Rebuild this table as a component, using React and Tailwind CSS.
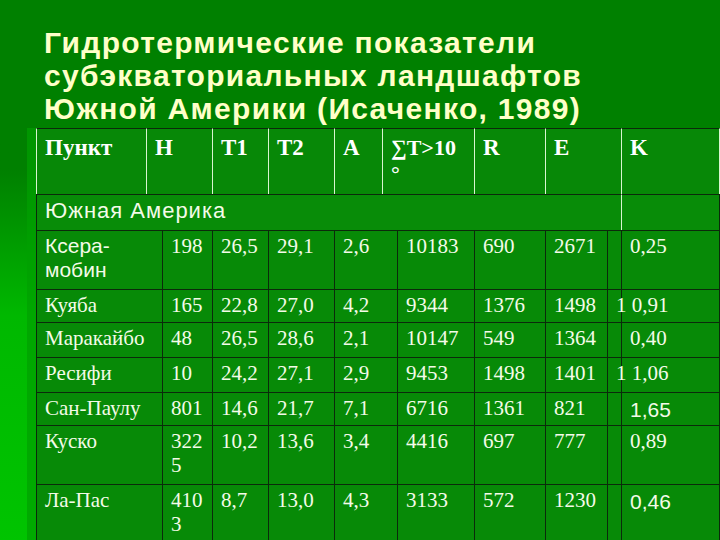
import React from 'react';

const serif = "font-['Liberation_Serif','Times_New_Roman',serif]";
const sans = "font-['Liberation_Sans',Arial,sans-serif]";

// data rows of the table
const rows = [
  { name: ['Ксера-', 'мобин'], nameSans: true, h: ['198'], t1: '26,5', t2: '29,1', a: '2,6', s: '10183', r: '690', e: '2671', k: '0,25', height: 'h-[59px]' },
  { name: ['Куяба'], h: ['165'], t1: '22,8', t2: '27,0', a: '4,2', s: '9344', r: '1376', e: '1498', k: '1 0,91', kShift: true, height: 'h-[33px]' },
  { name: ['Маракайбо'], h: ['48'], t1: '26,5', t2: '28,6', a: '2,1', s: '10147', r: '549', e: '1364', k: '0,40', height: 'h-[35px]' },
  { name: ['Ресифи'], h: ['10'], t1: '24,2', t2: '27,1', a: '2,9', s: '9453', r: '1498', e: '1401', k: '1 1,06', kShift: true, height: 'h-[35px]' },
  { name: ['Сан-Паулу'], h: ['801'], t1: '14,6', t2: '21,7', a: '7,1', s: '6716', r: '1361', e: '821', k: '1,65', kSans: true, height: 'h-[33px]' },
  { name: ['Куско'], h: ['322', '5'], t1: '10,2', t2: '13,6', a: '3,4', s: '4416', r: '697', e: '777', k: '0,89', height: 'h-[59px]' },
  { name: ['Ла-Пас'], h: ['410', '3'], t1: '8,7', t2: '13,0', a: '4,3', s: '3133', r: '572', e: '1230', k: '0,46', kSans: true, height: 'h-[60px]' },
];

const Lines = ({ parts }) =>
  parts.map((p, i) => (
    <React.Fragment key={i}>
      {i > 0 && <br />}
      {p}
    </React.Fragment>
  ));

const Td = ({ children, className = '', colSpan }) => (
  <td
    colSpan={colSpan}
    className={`border-l border-t border-[#0b2a0b] align-top pl-[8px] pt-[3px] leading-[24px] whitespace-nowrap ${className}`}
  >
    {children}
  </td>
);

const Th = ({ children, className = '', colSpan }) => (
  <th
    colSpan={colSpan}
    className={`border-l border-t border-l-[#d8f5d0] border-t-[#0b2a0b] align-top text-left pl-[8px] pt-[6px] leading-[26px] font-bold whitespace-nowrap ${className}`}
  >
    {children}
  </th>
);

export default function App() {
  return (
    <div className="w-[720px] h-[540px] overflow-hidden bg-[#008000] flex flex-col">
      <h1
        className={`${sans} font-bold text-[30px] leading-[33px] text-[#ffffc8] pl-[44px] pt-[26px] pb-[3px] tracking-[1.3px]`}
      >
        Гидротермические показатели
        <br />
        субэкваториальных ландшафтов
        <br />
        Южной Америки (Исаченко, 1989)
      </h1>

      <div className="flex flex-1">
        <div className="w-[36px] shrink-0 bg-gradient-to-b from-[#008000] from-10% via-[#00b800] via-45% to-[#00c400] flex justify-end">
          <div className="w-[9px] bg-[#00a000] opacity-70" />
        </div>

        <table
          className={`${serif} table-fixed border-separate border-spacing-0 w-[684px] text-[21px] text-[#f4fbe8]`}
        >
          <colgroup>
            <col className="w-[110px]" />
            <col className="w-[16px]" />
            <col className="w-[50px]" />
            <col className="w-[56px]" />
            <col className="w-[66px]" />
            <col className="w-[48px]" />
            <col className="w-[15px]" />
            <col className="w-[77px]" />
            <col className="w-[71px]" />
            <col className="w-[62px]" />
            <col className="w-[14px]" />
            <col className="w-[99px]" />
          </colgroup>
          <thead>
            <tr className="h-[66px] bg-[#078807] text-white text-[23px]">
              <Th className="border-l-[#0b2a0b]">Пункт</Th>
              <Th colSpan={2}>H</Th>
              <Th>T1</Th>
              <Th>T2</Th>
              <Th>A</Th>
              <Th colSpan={2} className="text-[22px]">
                ∑T&gt;10
                <br />°
              </Th>
              <Th>R</Th>
              <Th colSpan={2}>E</Th>
              <Th className="border-r border-r-[#d8f5d0]">K</Th>
            </tr>
          </thead>
          <tbody>
            <tr className="h-[36px] bg-[#088c08]">
              <td
                colSpan={11}
                className={`${sans} border-l border-t border-[#0b2a0b] align-top pl-[8px] pt-[4px] text-[22px] tracking-[1px] leading-[24px] whitespace-nowrap`}
              >
                Южная Америка
              </td>
              <td className="border-l border-t border-r border-l-[#d8f5d0] border-t-[#0b2a0b] border-r-[#0b2a0b]" />
            </tr>
            {rows.map((r, i) => (
              <tr key={i} className={`${r.height} bg-[#078a07]`}>
                <Td colSpan={2} className={r.nameSans ? `${sans} text-[21px]` : ''}>
                  <Lines parts={r.name} />
                </Td>
                <Td>
                  <Lines parts={r.h} />
                </Td>
                <Td>{r.t1}</Td>
                <Td>{r.t2}</Td>
                <Td colSpan={2}>{r.a}</Td>
                <Td>{r.s}</Td>
                <Td>{r.r}</Td>
                <Td>{r.e}</Td>
                <Td />
                <Td
                  className={`border-r ${r.kShift ? 'indent-[-14px]' : ''} ${r.kSans ? `${sans} text-[21px] pt-[5px]` : ''}`}
                >
                  {r.k}
                </Td>
              </tr>
            ))}
          </tbody>
        </table>
      </div>
    </div>
  );
}
